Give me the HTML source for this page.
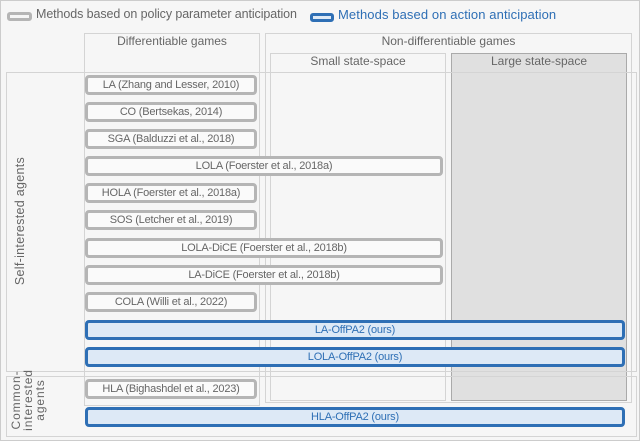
<!DOCTYPE html><html><head><style>
body{margin:0;width:640px;height:441px;background:#f6f6f6;font-family:"Liberation Sans",sans-serif;position:relative;overflow:hidden;color:#666}
.a{position:absolute;box-sizing:border-box}
.g{border:1px solid #d4d4d4}
.m{position:absolute;box-sizing:border-box;height:20px;border:3px solid #b5b5b5;border-radius:4px;background:#fafafa;font-size:11px;color:#666;text-align:center;line-height:14px;letter-spacing:-0.2px}
.b{border-color:#2e6fb5;background:#dde9f6;color:#2e6fb5}
.t{position:absolute;font-size:12px;color:#666;text-align:center}
</style></head><body>
<div class="a" style="left:0;top:0;width:640px;height:441px;border:1px solid #ccc"></div>
<div class="a" style="left:7px;top:12px;width:25px;height:9px;border:3px solid #b5b5b5;border-radius:3px"></div>
<div class="t" style="left:36px;top:7px;font-size:12.5px;letter-spacing:-0.1px">Methods based on policy parameter anticipation</div>
<div class="a" style="left:310px;top:13px;width:24px;height:9px;border:3px solid #2e6fb5;border-radius:3px;background:#dde9f6"></div>
<div class="t" style="left:338px;top:7px;font-size:13px;color:#2e6fb5;letter-spacing:0.1px">Methods based on action anticipation</div>
<div class="a g" style="left:84px;top:33px;width:176px;height:373px"></div>
<div class="a g" style="left:265px;top:33px;width:367px;height:370px"></div>
<div class="a g" style="left:270px;top:53px;width:176px;height:348px"></div>
<div class="a" style="left:451px;top:53px;width:176px;height:348px;background:#e0e0e0;border:1px solid #aaa"></div>
<div class="t" style="left:84px;top:34px;width:176px">Differentiable games</div>
<div class="t" style="left:265px;top:34px;width:367px">Non-differentiable games</div>
<div class="t" style="left:270px;top:54px;width:176px">Small state-space</div>
<div class="t" style="left:451px;top:54px;width:176px">Large state-space</div>
<div class="a g" style="left:6px;top:72px;width:631px;height:300px"></div>
<div class="a g" style="left:6px;top:376px;width:631px;height:61px"></div>
<div class="t" style="left:-55px;top:214px;width:150px;transform:rotate(-90deg);font-size:12.5px;letter-spacing:0.3px">Self-interested agents</div>
<div class="t" style="left:-7px;top:382px;width:70px;transform:rotate(-90deg);line-height:12px;font-size:12px;letter-spacing:0.9px">Common-<br>interested<br>agents</div>
<div class="m" style="left:85px;top:75px;width:172px">LA (Zhang and Lesser, 2010)</div>
<div class="m" style="left:85px;top:102px;width:172px">CO (Bertsekas, 2014)</div>
<div class="m" style="left:85px;top:129px;width:172px">SGA (Balduzzi et al., 2018)</div>
<div class="m" style="left:85px;top:156px;width:358px">LOLA (Foerster et al., 2018a)</div>
<div class="m" style="left:85px;top:183px;width:172px">HOLA (Foerster et al., 2018a)</div>
<div class="m" style="left:85px;top:210px;width:172px">SOS (Letcher et al., 2019)</div>
<div class="m" style="left:85px;top:238px;width:358px">LOLA-DiCE (Foerster et al., 2018b)</div>
<div class="m" style="left:85px;top:265px;width:358px">LA-DiCE (Foerster et al., 2018b)</div>
<div class="m" style="left:85px;top:292px;width:172px">COLA (Willi et al., 2022)</div>
<div class="m b" style="left:85px;top:320px;width:540px">LA-OffPA2 (ours)</div>
<div class="m b" style="left:85px;top:347px;width:540px">LOLA-OffPA2 (ours)</div>
<div class="m" style="left:85px;top:379px;width:172px">HLA (Bighashdel et al., 2023)</div>
<div class="m b" style="left:85px;top:407px;width:540px">HLA-OffPA2 (ours)</div>
</body></html>
